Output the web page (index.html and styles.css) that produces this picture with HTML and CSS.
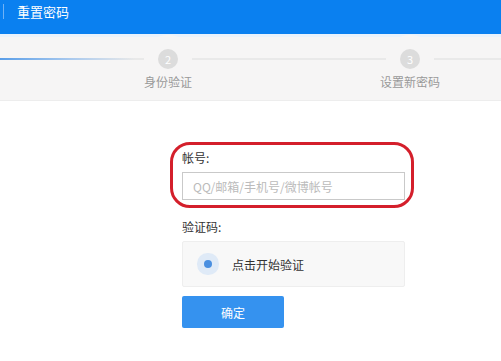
FILE: index.html
```html
<!DOCTYPE html>
<html lang="zh-CN">
<head>
    <meta charset="UTF-8">
    <meta name="viewport" content="width=device-width, initial-scale=1.0">
    <title>重置密码</title>
    <link rel="stylesheet" href="styles.css">
</head>

<body>
    <!-- 상단 바 -->
    <div class="top-bar">
        <span class="top-bar-line"></span>
        <span class="top-bar-title">重置密码</span>
    </div>

    <!-- 단계 표시 -->
    <div class="steps">
        <div class="steps-track"></div>
        <div class="step">
            <span class="step-num">2</span>
            <span class="step-name">身份验证</span>
        </div>
        <div class="step">
            <span class="step-num">3</span>
            <span class="step-name">设置新密码</span>
        </div>
    </div>

    <!-- 입력 폼 -->
    <form class="reset-form">
        <div class="field field-marked">
            <label class="field-label">帐号:</label>
            <input type="text" class="field-input" placeholder="QQ/邮箱/手机号/微博帐号">
        </div>
        <div class="field">
            <label class="field-label">验证码:</label>
            <div class="captcha">
                <span class="captcha-dot"></span>
                <span class="captcha-text">点击开始验证</span>
            </div>
        </div>
        <button type="submit" class="submit-btn">确定</button>
    </form>
</body>
</html>
```

FILE: styles.css
```css
body {
    margin: 0;
    background-color: #fff;
    font-family: "Noto Sans CJK SC", "Liberation Sans", sans-serif;
    color: #333;
}

/* 상단 바 */
.top-bar {
    display: flex;
    align-items: flex-start;
    height: 31px;
    padding-top: 3px;
    box-sizing: border-box;
    background-color: #0a80f0;
    border-bottom: 3px solid #e9f2fc;
    box-sizing: content-box;
}

.top-bar-line {
    width: 1px;
    height: 15px;
    margin: 1px 13px 0 3px;
    background-color: #6fb2f6;
}

.top-bar-title {
    color: #fff;
    font-size: 13px;
    line-height: 17px;
}

/* 단계 */
.steps {
    position: relative;
    display: flex;
    gap: 162px;
    height: 63px;
    padding-left: 128px;
    background-color: #f6f5f5;
    border-bottom: 1px solid #ededed;
}

.steps-track {
    position: absolute;
    left: 0;
    right: 0;
    top: 21px;
    height: 2px;
    background: linear-gradient(to right, #5a9ee8 0, #a9c9ee 70px, #e9e9e9 135px, #e9e9e9 100%);
}

.step {
    position: relative;
    display: flex;
    flex-direction: column;
    align-items: center;
    width: 80px;
    padding-top: 12px;
}

.step-num {
    width: 20px;
    height: 20px;
    border-radius: 50%;
    background-color: #dcdcdc;
    color: #fff;
    font-size: 11px;
    line-height: 20px;
    text-align: center;
    box-shadow: 0 0 0 14px #f6f5f5;
}

.step-name {
    margin-top: 4px;
    font-size: 12px;
    line-height: 18px;
    color: #999;
}

/* 폼 */
.reset-form {
    display: flex;
    flex-direction: column;
    width: 223px;
    margin: 0 0 0 182px;
    padding-top: 48px;
}

.field {
    display: flex;
    flex-direction: column;
    margin-bottom: 18px;
}

.field-marked {
    position: relative;
}

.field-marked::after {
    content: "";
    position: absolute;
    left: -12px;
    right: -9px;
    top: -7px;
    bottom: -8px;
    border: 3px solid #d41f2b;
    border-radius: 20px;
}

.field-label {
    font-size: 12px;
    line-height: 18px;
    margin-bottom: 5px;
}

.field-input {
    height: 28px;
    padding: 0 10px;
    box-sizing: border-box;
    border: 1px solid #c9c9c9;
    font-family: inherit;
    font-size: 12px;
    outline: none;
}

.field-input::placeholder {
    color: #bbb;
}

.captcha {
    display: flex;
    align-items: center;
    height: 46px;
    box-sizing: border-box;
    padding-left: 15px;
    background-color: #f8f8f8;
    border: 1px solid #eee;
    border-radius: 2px;
}

.captcha-dot {
    width: 8px;
    height: 8px;
    border-radius: 50%;
    background-color: #4a8fe0;
    box-shadow: 0 0 0 7px #dfeaf7;
    margin: 0 20px 0 6px;
}

.captcha-text {
    font-size: 12px;
}

.submit-btn {
    width: 102px;
    height: 32px;
    margin-top: -9px;
    border: none;
    border-radius: 2px;
    background-color: #3592ef;
    color: #fff;
    font-family: inherit;
    font-size: 12px;
    cursor: pointer;
}
```
